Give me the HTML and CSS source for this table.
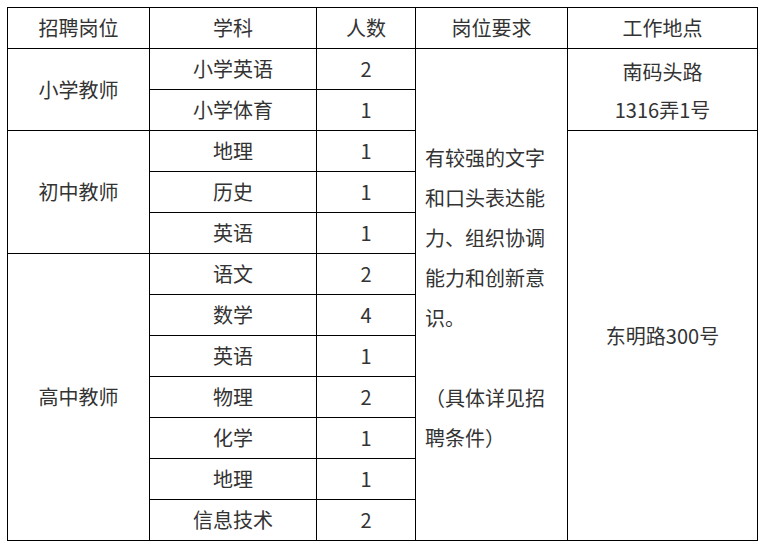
FILE: index.html
```html
<!DOCTYPE html>
<html lang="zh-CN">
<head>
<meta charset="utf-8">
<title>招聘岗位</title>
<link rel="stylesheet" href="styles.css">
</head>
<body>
<div class="page">
<table class="jobs">
  <colgroup>
    <col class="c1"><col class="c2"><col class="c3"><col class="c4"><col class="c5">
  </colgroup>
  <thead>
    <tr><th>招聘岗位</th><th>学科</th><th>人数</th><th>岗位要求</th><th>工作地点</th></tr>
  </thead>
  <tbody>
    <tr>
      <td rowspan="2">小学教师</td><td>小学英语</td><td>2</td>
      <td rowspan="12" class="req"><p>有较强的文字和口头表达能力、组织协调能力和创新意识。</p><p>&nbsp;</p><p>（具体详见招聘条件）</p></td>
      <td rowspan="2" class="multi">南码头路<br>1316弄1号</td>
    </tr>
    <tr><td>小学体育</td><td>1</td></tr>
    <tr><td rowspan="3">初中教师</td><td>地理</td><td>1</td><td rowspan="10">东明路300号</td></tr>
    <tr><td>历史</td><td>1</td></tr>
    <tr><td>英语</td><td>1</td></tr>
    <tr><td rowspan="7">高中教师</td><td>语文</td><td>2</td></tr>
    <tr><td>数学</td><td>4</td></tr>
    <tr><td>英语</td><td>1</td></tr>
    <tr><td>物理</td><td>2</td></tr>
    <tr><td>化学</td><td>1</td></tr>
    <tr><td>地理</td><td>1</td></tr>
    <tr><td>信息技术</td><td>2</td></tr>
  </tbody>
</table>
</div>
</body>
</html>
```
FILE: styles.css
```css
html, body {
  margin: 0;
  padding: 0;
  background: #fff;
}
.page {
  padding: 7px 0 0 7px;
}
.jobs {
  border-collapse: collapse;
  table-layout: fixed;
  width: 750px;
  font-family: "Noto Sans CJK SC", "Microsoft YaHei", sans-serif;
  font-size: 20px;
  color: #333;
}
.c1 { width: 142px; }
.c2 { width: 167px; }
.c3 { width: 99px; }
.c4 { width: 152px; }
.c5 { width: 190px; }
.jobs th, .jobs td {
  border: 1px solid #000;
  height: 40px;
  padding: 0 9px;
  text-align: center;
  vertical-align: middle;
  font-weight: normal;
  line-height: 24px;
  box-sizing: border-box;
}
.jobs tr { height: 41px; }
.jobs td.multi {
  vertical-align: top;
  line-height: 38px;
  padding-top: 4px;
}
.jobs td.req {
  text-align: left;
  line-height: 40px;
  padding-top: 6px;
}
.req p {
  margin: 0;
}
```
